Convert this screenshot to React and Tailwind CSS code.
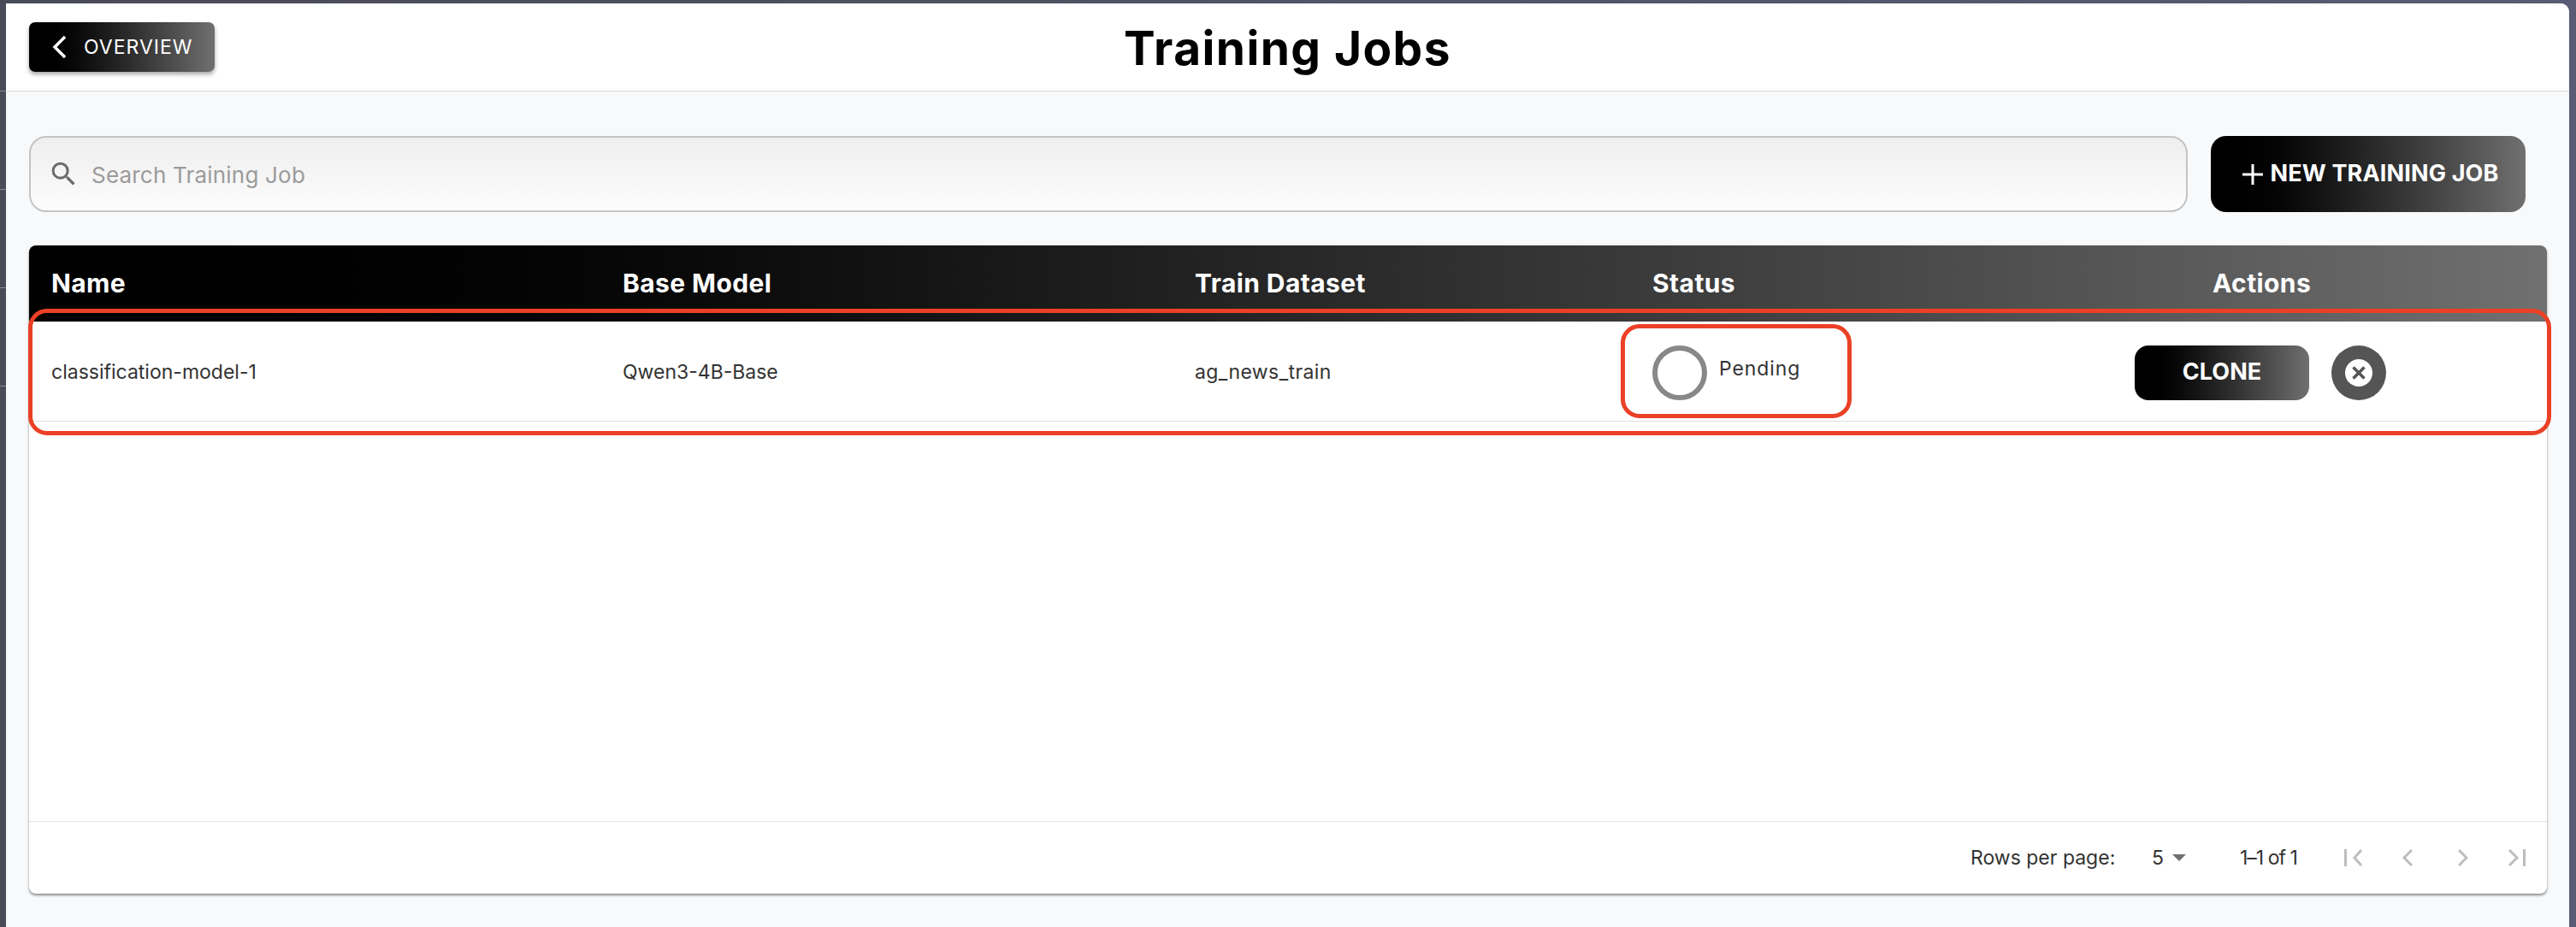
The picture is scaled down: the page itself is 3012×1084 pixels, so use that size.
import React from "react";
import { MdSearch } from "react-icons/md";

const FONT = "font-['Inter','Liberation_Sans',sans-serif]";

// left edge of the app behind the window, rows show through as thin lines
const BackdropStrip = () => (
  <div className="flex w-[7px] shrink-0 flex-col pt-[102px]">
    {[0, 1, 2, 3].map((i) => (
      <div key={i} className="h-[115px] border-t border-[#8a8b96]" />
    ))}
  </div>
);

const HeaderCell = ({ className = "", children }) => (
  <div className={`text-[30px] font-bold tracking-[0.4px] text-white ${className}`}>{children}</div>
);

const RowCell = ({ className = "", children }) => (
  <div className={`text-[23px] text-[#333333] ${className}`}>{children}</div>
);

const PagerIcon = ({ width, d, className = "" }) => (
  <svg width={width} height="20" viewBox={`0 0 ${width} 20`} fill="none" stroke="#bdbdbd" strokeWidth="3" className={className}>
    <path d={d} />
  </svg>
);

export default function App() {
  return (
    <div className={`flex h-[1084px] w-[3012px] overflow-hidden bg-gradient-to-r from-[#4a4b58] to-[#5a5b75] pt-[4px] ${FONT}`}>
      <BackdropStrip />
      <div className="relative flex min-w-0 flex-1 flex-col rounded-tr-[10px] bg-[#f8f9fb]">
        {/* Top bar */}
        <div className="relative flex h-[103px] shrink-0 items-center justify-center rounded-tr-[10px] border-b border-[#d8d8d8] bg-white">
          <button className="absolute left-[27px] top-[22px] flex h-[58px] w-[217px] items-center rounded-[7px] bg-gradient-to-r from-black to-[#707070] pl-[27px] text-[23px] tracking-[1px] text-white shadow-[0_3px_5px_rgba(0,0,0,0.35)]">
            <svg width="16" height="28" viewBox="0 0 16 28" fill="none" stroke="white" strokeWidth="3.5">
              <path d="M15 2 3 14l12 12" />
            </svg>
            <span className="ml-[21px]">OVERVIEW</span>
          </button>
          <h1 className="mt-[2px] text-[55px] font-bold leading-none tracking-[1.4px] text-black">Training Jobs</h1>
        </div>

        {/* Search + new job */}
        <div className="mt-[52px] flex h-[89px] shrink-0 gap-[27px] pl-[27px] pr-[51px]">
          <div className="flex flex-1 items-center rounded-[20px] border-2 border-[#c4c4c4] bg-gradient-to-b from-[#eeeeee] to-[#fdfdfd] pl-[20px]">
            <MdSearch size={37} color="#6b6b6b" />
            <span className="ml-[14px] mt-[2px] text-[26px] tracking-[0.2px] text-[#9b9b9b]">Search Training Job</span>
          </div>
          <button className="flex w-[368px] items-center justify-center gap-[8px] rounded-[18px] bg-gradient-to-r from-black to-[#707070] pl-[6px] text-[27px] font-bold tracking-[0.15px] text-white">
            <svg width="24" height="24" viewBox="0 0 24 24" stroke="white" strokeWidth="3">
              <path d="M12 0v24M0 12h24" />
            </svg>
            NEW TRAINING JOB
          </button>
        </div>

        {/* Table */}
        <div className="ml-[27px] mr-[26px] mt-[39px] flex h-[758px] flex-col rounded-[8px] bg-white shadow-[0_2px_3px_rgba(0,0,0,0.45)]">
          <div className="grid h-[89px] shrink-0 grid-cols-[668px_669px_535px_1fr] items-center rounded-t-[8px] bg-gradient-to-r from-black to-[#707070] pl-[26px]">
            <HeaderCell>Name</HeaderCell>
            <HeaderCell>Base Model</HeaderCell>
            <HeaderCell>Train Dataset</HeaderCell>
            <div className="grid grid-cols-[655px_1fr]">
              <HeaderCell>Status</HeaderCell>
              <HeaderCell>Actions</HeaderCell>
            </div>
          </div>

          <div className="grid h-[117px] shrink-0 grid-cols-[668px_669px_535px_1fr] items-center border-b border-[#e0e0e0] pl-[26px] pt-[3px]">
            <RowCell>classification-model-1</RowCell>
            <RowCell>Qwen3-4B-Base</RowCell>
            <RowCell className="tracking-[0.4px]">ag_news_train</RowCell>
            <div className="flex items-center">
              <div className="h-[64px] w-[64px] rounded-full border-[6px] border-[#888888]" />
              <RowCell className="mb-[8px] ml-[14px] w-[486px] tracking-[0.9px]">Pending</RowCell>
              <button className="h-[64px] w-[204px] rounded-[16px] bg-gradient-to-r from-black to-[#707070] text-[27px] font-bold text-white">
                CLONE
              </button>
              <div className="ml-[26px] flex h-[64px] w-[64px] items-center justify-center rounded-full bg-[#555555]">
                <svg width="32" height="32" viewBox="0 0 32 32">
                  <circle cx="16" cy="16" r="16" fill="white" />
                  <path d="m9.5 9.5 13 13m0-13-13 13" stroke="#555555" strokeWidth="3.5" />
                </svg>
              </div>
            </div>
          </div>

          <div className="flex-1" />

          {/* Pagination */}
          <div className="flex h-[85px] shrink-0 items-center border-t border-[#e4e4e4] pl-[2270px] text-[23px] text-[#333333]">
            <span className="w-[168px] whitespace-nowrap">Rows per page:</span>
            <span className="ml-[44px] w-[14px]">5</span>
            <svg width="16" height="8" viewBox="0 0 16 8" className="ml-[10px]">
              <path d="M0 0h16L8 8z" fill="#707070" />
            </svg>
            <span className="ml-[63px] w-[67px] whitespace-nowrap tracking-[-1px]">1–1 of 1</span>
            <PagerIcon width={21} d="M1.5 0v20M20 1l-8 9 8 9" className="ml-[55px]" />
            <PagerIcon width={12} d="M11 1l-9 9 9 9" className="ml-[47px]" />
            <PagerIcon width={12} d="M1 1l9 9-9 9" className="ml-[53px]" />
            <PagerIcon width={20} d="M1 1l9 9-9 9M18.5 0v20" className="ml-[47px]" />
          </div>
        </div>

        {/* Red annotation boxes over the row */}
        <div className="pointer-events-none absolute left-[26px] top-[357px] h-[148px] w-[2950px] rounded-[22px] border-[5px] border-[#ea4126]" />
        <div className="pointer-events-none absolute left-[1888px] top-[375px] h-[110px] w-[270px] rounded-[22px] border-[5px] border-[#ea4126]" />
      </div>
      <div className="w-[8px] shrink-0" />
    </div>
  );
}
